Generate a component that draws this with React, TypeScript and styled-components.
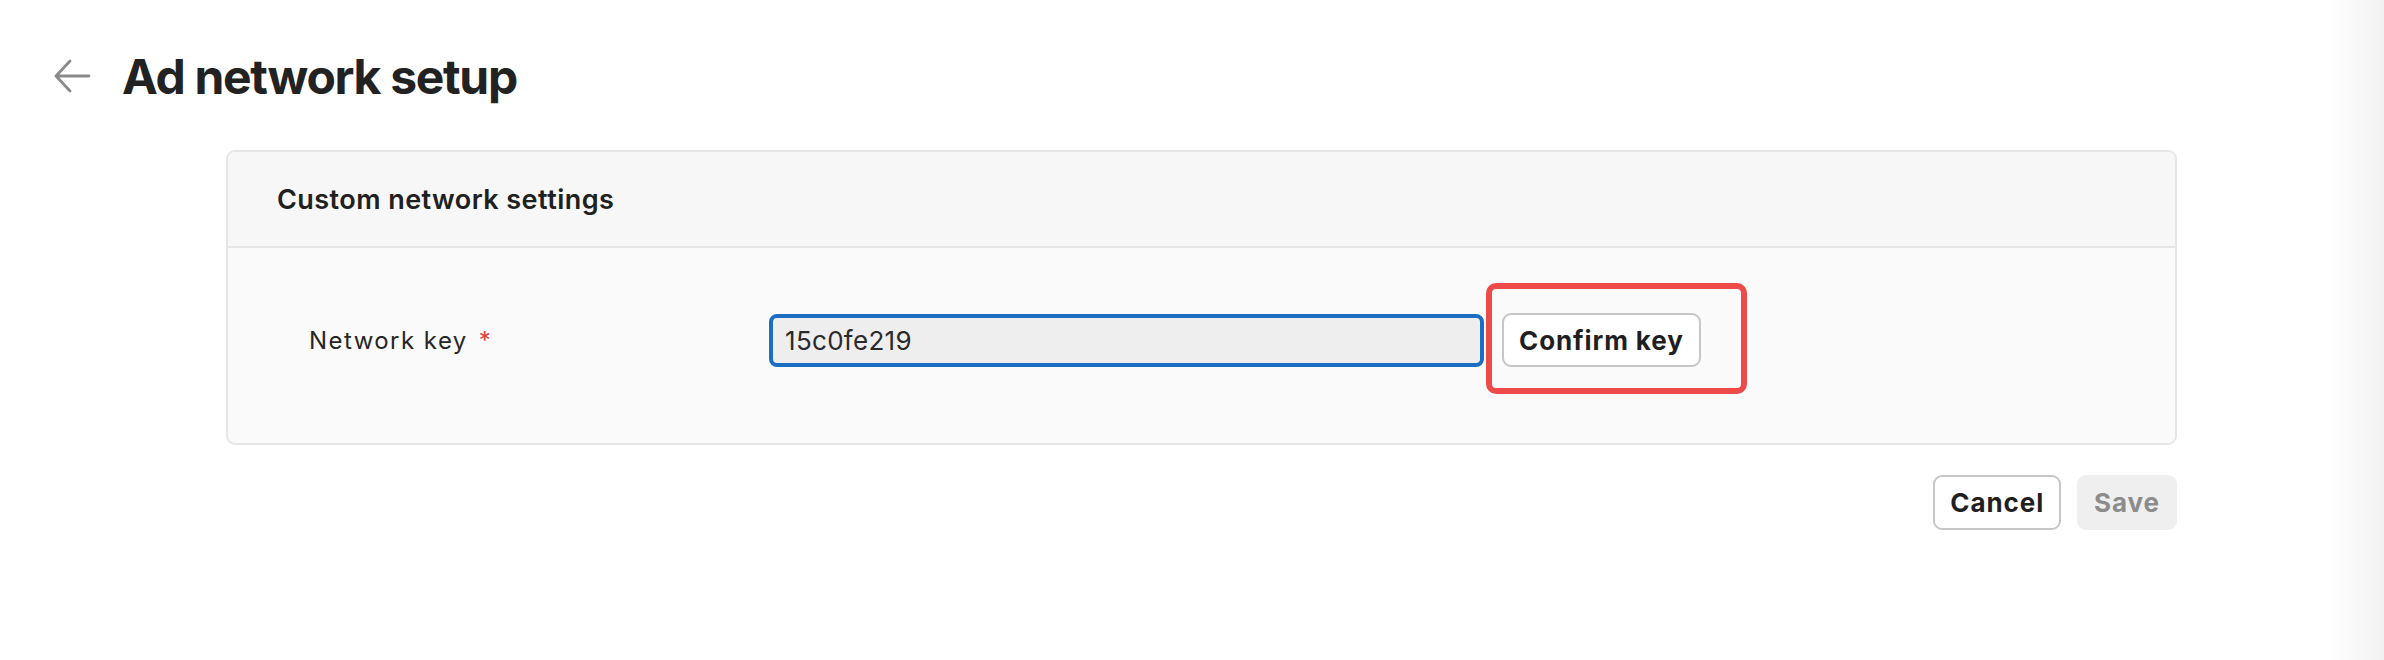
import React from "react";
import styled, { createGlobalStyle } from "styled-components";

const GlobalStyle = createGlobalStyle`
  html {
    background: linear-gradient(to right, #ffffff 97.6%, #f2f2f2 100%);
  }
  body {
    margin: 0;
    font-family: Inter, "Noto Sans", "Liberation Sans", sans-serif;
    color: #1f1f1f;
  }
`;

const Page = styled.div`
  width: 2384px;
  height: 660px;
  box-sizing: border-box;
  padding: 44px 207px 0 0;
`;

const TitleBar = styled.div`
  display: flex;
  align-items: center;
  gap: 31px;
  padding-left: 53px;
  height: 64px;
`;

const BackButton = styled.button`
  display: flex;
  align-items: center;
  justify-content: center;
  width: 38px;
  height: 34px;
  padding: 0;
  border: none;
  background: none;
  color: #8a8a8a;
  cursor: pointer;
`;

const Title = styled.h1`
  margin: 0;
  font-size: 48px;
  font-weight: 700;
  letter-spacing: -1.3px;
  color: #222;
`;

const Content = styled.div`
  margin-left: 226px;
  margin-top: 42px;
`;

const Card = styled.section`
  border: 2px solid #e6e6e6;
  border-radius: 9px;
  background: #fafafa;
  overflow: hidden;
`;

const CardHeader = styled.header`
  height: 94px;
  display: flex;
  align-items: center;
  padding-left: 49px;
  background: #f7f7f7;
  border-bottom: 2px solid #e6e6e6;
`;

const CardTitle = styled.h2`
  margin: 0;
  font-size: 27px;
  font-weight: 600;
  letter-spacing: 0.45px;
  color: #202020;
`;

const CardBody = styled.div`
  padding: 65px 0 76px 81px;
`;

const FieldRow = styled.div`
  display: flex;
  align-items: center;
`;

const Label = styled.label`
  width: 460px;
  font-size: 24px;
  letter-spacing: 1.45px;
  color: #262626;
`;

const Required = styled.span`
  color: #e0403c;
  margin-left: 11px;
`;

const KeyInput = styled.input`
  box-sizing: border-box;
  width: 715px;
  height: 53px;
  padding: 0 12px;
  border: 4px solid #1b6ec2;
  border-radius: 8px;
  background: #eeeeee;
  font-family: inherit;
  font-size: 26px;
  letter-spacing: 0.3px;
  color: #2a2a2a;
  outline: none;
  caret-color: #222;
`;

const Highlight = styled.div`
  position: relative;
  margin-left: 18px;

  &::after {
    content: "";
    position: absolute;
    inset: -30px -46px -27px -16px;
    border: 6px solid #ef4a4a;
    border-radius: 10px;
    pointer-events: none;
  }
`;

const Button = styled.button<{ $disabled?: boolean }>`
  box-sizing: border-box;
  height: 54px;
  padding: 0 15px;
  border: 2px solid ${(p) => (p.$disabled ? "#efefef" : "#c6c6c6")};
  border-radius: 9px;
  background: ${(p) => (p.$disabled ? "#efefef" : "#ffffff")};
  font-family: inherit;
  font-size: 26px;
  font-weight: 700;
  letter-spacing: 0.9px;
  color: ${(p) => (p.$disabled ? "#8c8c8c" : "#1f1f1f")};
  cursor: ${(p) => (p.$disabled ? "default" : "pointer")};
`;

const Footer = styled.div`
  display: flex;
  justify-content: flex-end;
  gap: 16px;
  margin-top: 30px;

  ${Button} {
    height: 55px;
  }
`;

const BackArrow = () => (
  <svg width="38" height="34" viewBox="0 0 38 34" fill="none">
    <path
      d="M36 17H3M17 2L3 17l14 15"
      stroke="currentColor"
      strokeWidth="2.8"
      strokeLinecap="round"
      strokeLinejoin="round"
    />
  </svg>
);

export default function App() {
  return (
    <>
      <GlobalStyle />
      <Page>
        <TitleBar>
          <BackButton aria-label="Back">
            <BackArrow />
          </BackButton>
          <Title>Ad network setup</Title>
        </TitleBar>
        <Content>
          <Card>
            <CardHeader>
              <CardTitle>Custom network settings</CardTitle>
            </CardHeader>
            <CardBody>
              <FieldRow>
                <Label htmlFor="network-key">
                  Network key<Required>*</Required>
                </Label>
                <KeyInput id="network-key" defaultValue="15c0fe219" autoFocus />
                <Highlight>
                  <Button>Confirm key</Button>
                </Highlight>
              </FieldRow>
            </CardBody>
          </Card>
          <Footer>
            <Button>Cancel</Button>
            <Button $disabled>Save</Button>
          </Footer>
        </Content>
      </Page>
    </>
  );
}
